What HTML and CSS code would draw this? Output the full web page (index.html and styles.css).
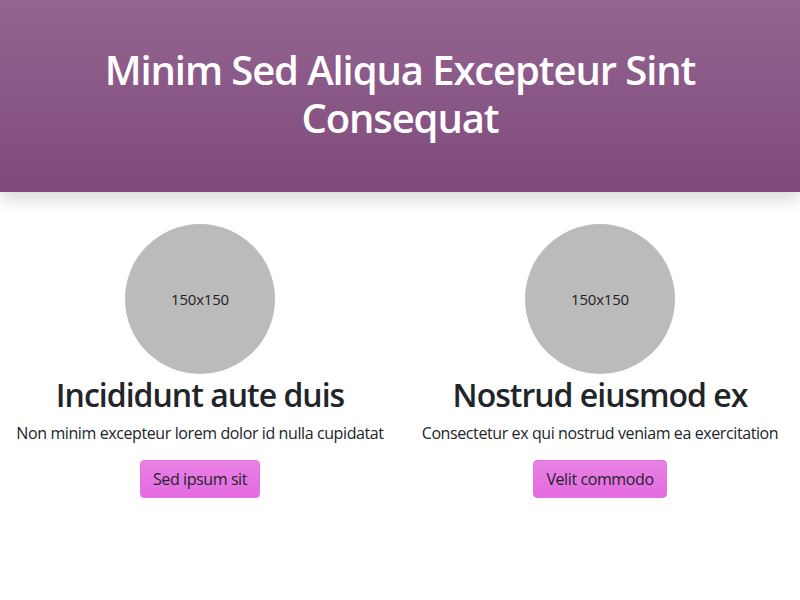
FILE: index.html
```html
<!DOCTYPE html>
<html lang="en">
<head>
<meta charset="utf-8">
<title>Minim Sed Aliqua</title>
<link rel="stylesheet" href="styles.css">
</head>
<body>
<header class="hero">
  <h1 class="hero-title">Minim Sed Aliqua Excepteur Sint Consequat</h1>
</header>
<main class="features">
  <section class="feature">
    <div class="avatar">150x150</div>
    <h2 class="feature-title">Incididunt aute duis</h2>
    <p class="feature-text">Non minim excepteur lorem dolor id nulla cupidatat</p>
    <button class="btn">Sed ipsum sit</button>
  </section>
  <section class="feature">
    <div class="avatar">150x150</div>
    <h2 class="feature-title">Nostrud eiusmod ex</h2>
    <p class="feature-text">Consectetur ex qui nostrud veniam ea exercitation</p>
    <button class="btn">Velit commodo</button>
  </section>
</main>
</body>
</html>
```
FILE: styles.css
```css
* { box-sizing: border-box; }
html, body { margin: 0; padding: 0; }
body {
  font-family: "Open Sans", "Noto Sans", sans-serif;
  font-size: 16px;
  line-height: 1.5;
  letter-spacing: -0.4px;
  color: #212529;
  background: #fff;
}
.hero {
  background: linear-gradient(to bottom, #946590, #7f4a7c);
  padding: 46px 40px 50px;
  box-shadow: 0 8px 16px rgba(0,0,0,0.15);
  text-align: center;
}
.hero-title {
  margin: 0;
  color: #fff;
  font-size: 40px;
  font-weight: 600;
  line-height: 1.2;
  letter-spacing: -1.1px;
}
.features {
  display: grid;
  grid-template-columns: 1fr 1fr;
  padding-top: 32px;
}
.feature {
  display: flex;
  flex-direction: column;
  align-items: center;
  text-align: center;
}
.avatar {
  width: 150px;
  height: 150px;
  border-radius: 50%;
  background: #bbbbbb;
  display: flex;
  align-items: center;
  justify-content: center;
  font-size: 15px;
  letter-spacing: -0.2px;
  color: #222;
}
.feature-title {
  margin: 0 0 7px;
  font-size: 32px;
  font-weight: 600;
  line-height: 1.2;
  letter-spacing: -1px;
  padding-top: 2px;
}
.feature-text {
  margin: 0 0 15px;
}
.btn {
  font-family: inherit;
  font-size: 16px;
  line-height: 24px;
  letter-spacing: -0.4px;
  padding: 6px 12px;
  border: 1px solid #e572e1;
  border-radius: 4px;
  color: #212529;
  background: linear-gradient(to bottom, #e981e4, #e46ae0);
  cursor: pointer;
}
```
